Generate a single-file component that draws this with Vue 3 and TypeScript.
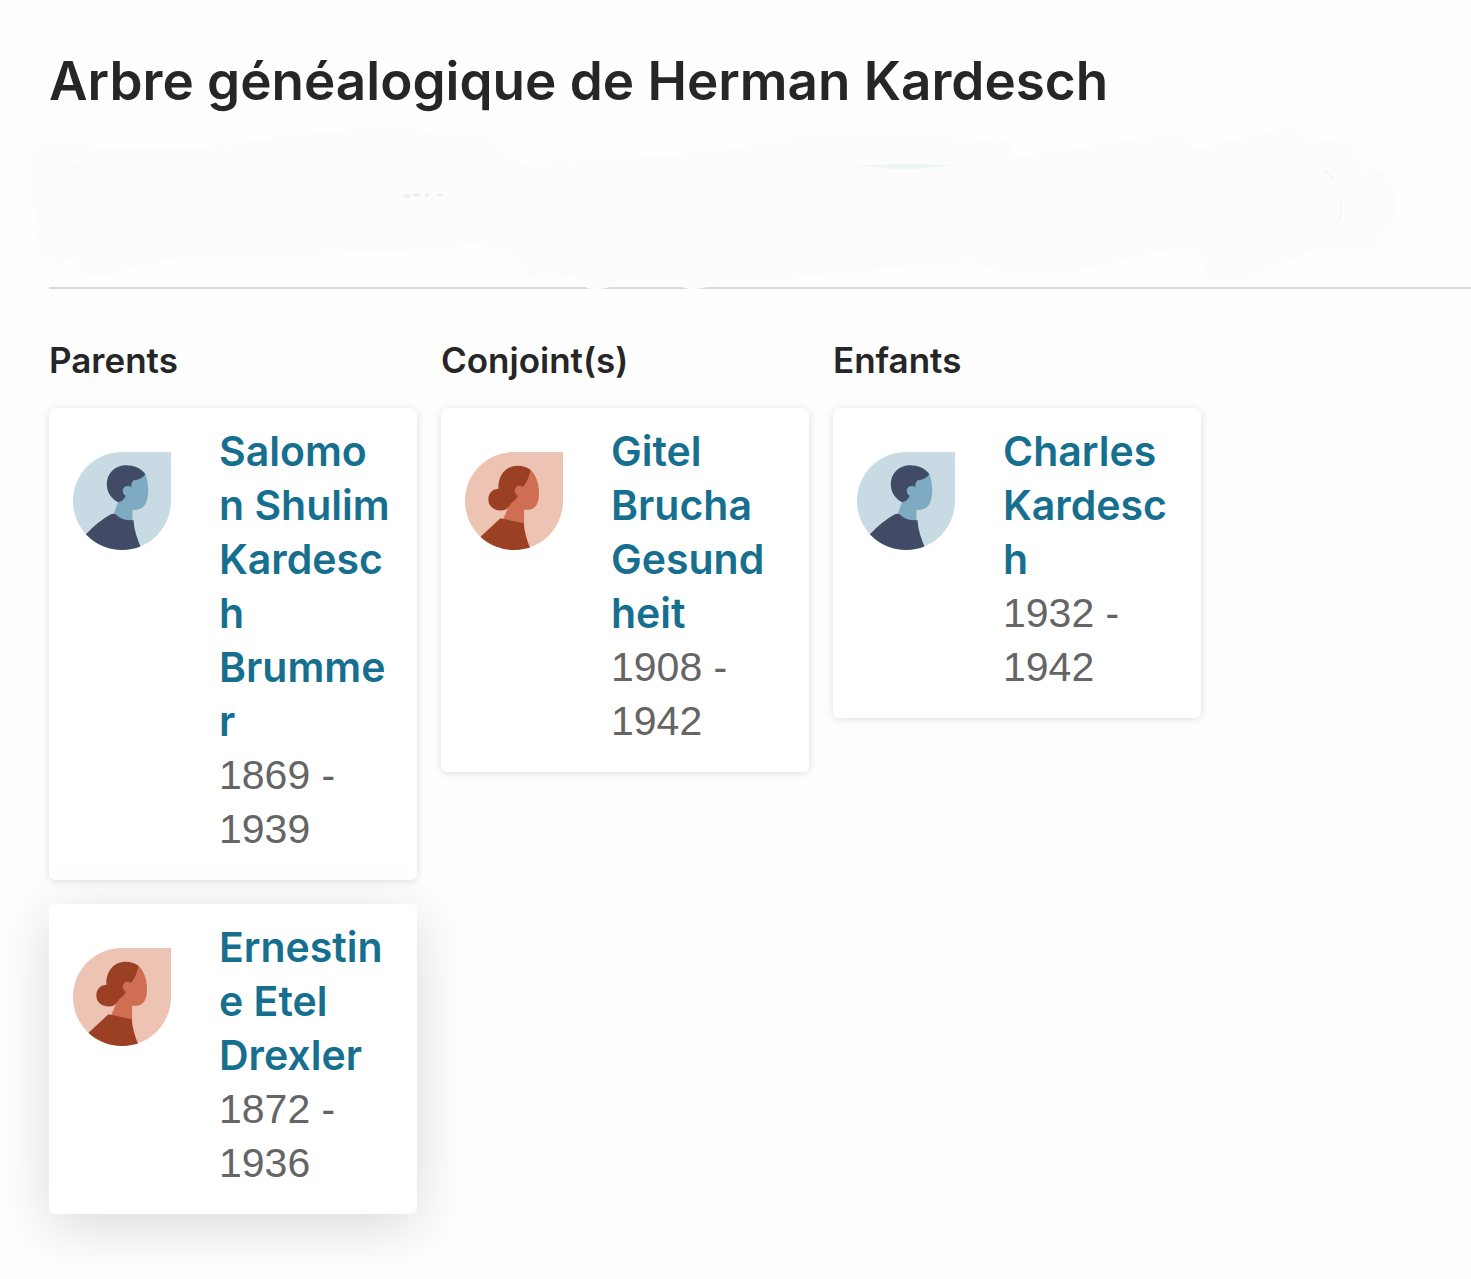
<script setup lang="ts">
interface Person {
  /** Name, split into the lines it takes in a narrow card */
  name: string[]
  years: string
  gender: 'male' | 'female'
  raised?: boolean
}

interface Group {
  title: string
  people: Person[]
}

const groups: Group[] = [
  {
    title: 'Parents',
    people: [
      {
        name: ['Salomo', 'n Shulim', 'Kardesc', 'h', 'Brumme', 'r'],
        years: '1869 - 1939',
        gender: 'male',
      },
      {
        name: ['Ernestin', 'e Etel', 'Drexler'],
        years: '1872 - 1936',
        gender: 'female',
        raised: true,
      },
    ],
  },
  {
    title: 'Conjoint(s)',
    people: [{ name: ['Gitel', 'Brucha', 'Gesund', 'heit'], years: '1908 - 1942', gender: 'female' }],
  },
  {
    title: 'Enfants',
    people: [{ name: ['Charles', 'Kardesc', 'h'], years: '1932 - 1942', gender: 'male' }],
  },
]
</script>

<template>
  <main class="page">
    <header class="header">
      <h1 class="title">Arbre généalogique de Herman Kardesch</h1>
      <svg class="smudge" viewBox="0 0 1471 292" aria-hidden="true">
        <path
          fill="#fcfcfc"
          d="M30 160Q33 143 47 143Q75 144 110 148Q200 150 240 143Q320 130 390 128Q425 126 434 137L488 134Q496 142 497 151Q514 152 520 163Q600 160 680 155Q740 148 780 142Q785 135 800 135L880 136L940 134Q955 135 960 144L995 138Q1014 138 1014 157L1040 154L1160 135Q1187 131 1195 149L1285 128Q1306 126 1311 143Q1340 138 1350 145Q1362 154 1363 170Q1393 166 1394 190L1397 207Q1395 226 1385 227Q1383 247 1372 250L1315 249L1245 281Q1205 292 1203 265L1198 249Q1180 247 1160 252L1080 270Q1010 280 970 262L940 263L800 277Q745 285 710 286Q700 290 690 289Q680 288 675 281Q645 281 620 284Q605 290 592 289Q580 287 577 277L535 278Q519 276 519 255Q504 255 498 249Q485 249 478 244L400 251Q290 256 190 257Q160 260 120 272Q76 286 75 259Q42 270 34 246Q34 237 41 228Q35 218 36 210Q14 194 32 178Q28 168 30 160Z"
        />
        <path fill="none" stroke="#fafafa" stroke-width="2" d="M52 196Q58 166 82 164H492" />
        <path fill="#edf6f7" d="M852 166Q905 163 952 165Q905 172 885 168Z" />
        <path
          fill="none"
          stroke="#eeeeee"
          stroke-width="3"
          d="M404 196h6M413 195h7M425 195h4M438 195h4"
        />
        <path fill="none" stroke="#f2f7f8" stroke-width="2" d="M1324 170L1334 180M1340 200Q1344 214 1335 227" />
      </svg>
    </header>

    <div class="groups">
      <section v-for="group in groups" :key="group.title" class="group">
        <h2 class="group-title">{{ group.title }}</h2>
        <article
          v-for="person in group.people"
          :key="person.name.join('')"
          class="card"
          :class="{ raised: person.raised }"
        >
          <svg v-if="person.gender === 'male'" class="avatar male" viewBox="0 0 290 290" aria-hidden="true">
            <path fill="#7fabc2" d="M130 96L180 70L215 66Q229 110 218 145Q210 174 176 171V210L150 214L118 190L134 146Z" />
            <path
              fill="#424b66"
              d="M133 149C113 138 100 120 100 95C100 62 126 39 156 39C181 39 202 48 214 65Q206 81 178 84Q171 92 173 104C162 97 148 102 147 114C147 122 151 127 156 130Q149 145 133 149Z"
            />
            <path
              fill="#424b66"
              d="M20 260L42 240Q73 206 112 184Q119 181 126 184Q142 199 160 201L179 202Q181 240 205 292H20Z"
            />
          </svg>
          <svg v-else class="avatar female" viewBox="0 0 290 290" aria-hidden="true">
            <path
              fill="#d06e53"
              d="M190 52H194Q217 76 219 116C220 151 211 174 175 171V212L144 214L113 199L126 168L140 110Z"
            />
            <path
              fill="#9c4024"
              d="M194 53Q188 83 172 103C161 95 147 102 147 114C147 122 151 127 157 130Q150 143 138 150Q130 163 120 171C98 178 69 168 69 140C69 121 84 109 99 109C97 69 121 41 155 41Q178 41 194 53Z"
            />
            <path fill="#9c4024" d="M20 277L49 248L104 197H109L174 211Q176 247 196 292H20Z" />
          </svg>
          <div class="details">
            <a class="name" href="#">{{ person.name.join('\n') }}</a>
            <span class="years">{{ person.years }}</span>
          </div>
        </article>
      </section>
    </div>
  </main>
</template>

<style>
body {
  margin: 0;
  background: #fefefe;
}
</style>

<style scoped>
.page {
  font-family: Inter, "Liberation Sans", sans-serif;
  color: #262626;
  padding-bottom: 64px;
}

.header {
  position: relative;
  box-sizing: border-box;
  margin-left: 49px;
  padding: 49px 0 174px;
  border-bottom: 2px solid #dadada;
}

.title {
  margin: 0;
  font-size: 53px;
  line-height: 64px;
  font-weight: 600;
}

/* Painted over the toolbar area and the rule beneath it */
.smudge {
  position: absolute;
  top: 0;
  left: -49px;
  width: calc(100% + 49px);
}

.groups {
  display: grid;
  grid-template-columns: repeat(3, minmax(0, 368px));
  gap: 24px;
  align-items: start;
  padding: 48px 49px 0;
}

.group {
  display: flex;
  flex-direction: column;
  gap: 24px;
}

.group-title {
  margin: 0;
  font-size: 35px;
  line-height: 47px;
  font-weight: 600;
}

.card {
  display: flex;
  align-items: flex-start;
  gap: 48px;
  padding: 16px 24px 24px;
  background: #fff;
  border-radius: 6px;
  box-shadow: 0 1px 8px rgba(0, 0, 0, 0.13);
}

.card.raised {
  position: relative;
  box-shadow: 0 12px 56px rgba(0, 0, 0, 0.15);
}

.avatar {
  flex: none;
  width: 98px;
  height: 98px;
  margin-top: 28px;
  border-radius: 50% 0 50% 50%;
  overflow: hidden;
}

.male {
  background: #c8dae3;
}

.female {
  background: #edc4b4;
}

.details {
  flex: 1;
  min-width: 0;
  font-size: 41px;
  line-height: 54px;
}

.name {
  display: block;
  color: #166f8e;
  font-weight: 600;
  text-decoration: none;
  white-space: pre;
}

.years {
  display: block;
  color: #656565;
  font-family: "Liberation Sans", Arial, sans-serif;
}
</style>
